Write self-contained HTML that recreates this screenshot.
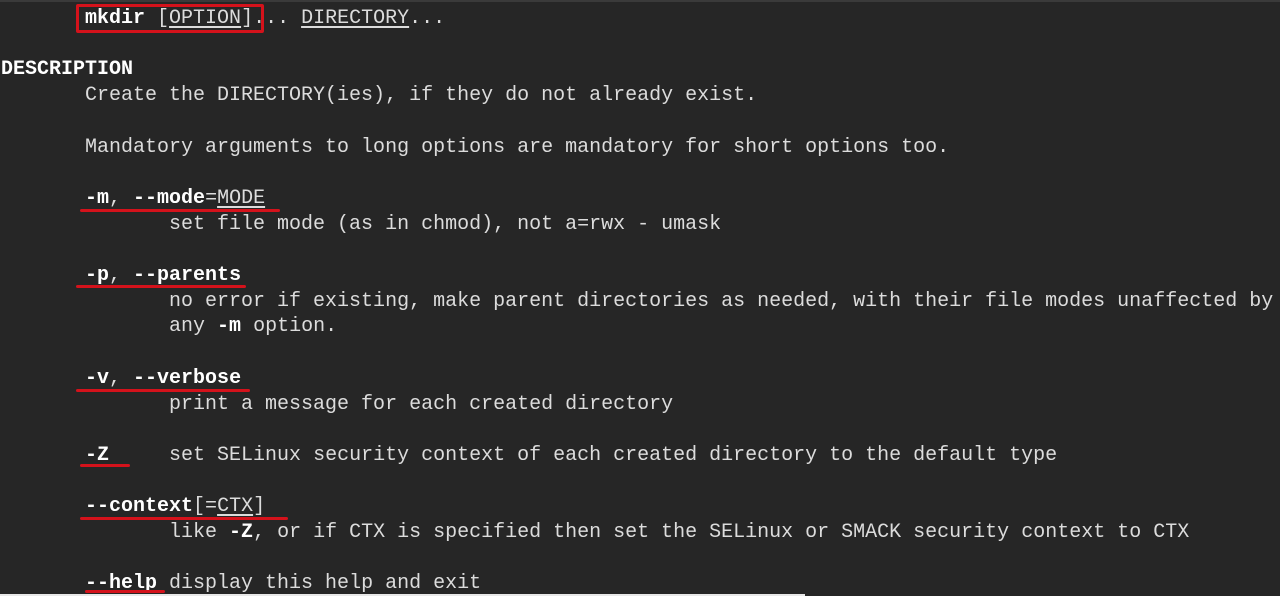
<!DOCTYPE html>
<html><head><meta charset="utf-8"><style>
html,body{margin:0;padding:0;background:#262626;width:1280px;height:596px;overflow:hidden;position:relative}
pre{position:absolute;left:1px;top:6px;margin:0;font:20px/25.7px "Liberation Mono","DejaVu Sans Mono",monospace;color:#dcdcdc;white-space:pre}
b{color:#fff}
u{text-decoration:underline;text-underline-offset:3px}
.r{position:absolute;background:#d4121b;height:3px;border-radius:2px}
</style></head><body>
<div style="position:absolute;left:0;top:0;width:1280px;height:2px;background:#3a3a3a"></div>
<pre>       <b>mkdir</b> [<u>OPTION</u>]... <u>DIRECTORY</u>...

<b>DESCRIPTION</b>
       Create the DIRECTORY(ies), if they do not already exist.

       Mandatory arguments to long options are mandatory for short options too.

       <b>-m</b>, <b>--mode</b>=<u>MODE</u>
              set file mode (as in chmod), not a=rwx - umask

       <b>-p</b>, <b>--parents</b>
              no error if existing, make parent directories as needed, with their file modes unaffected by
              any <b>-m</b> option.

       <b>-v</b>, <b>--verbose</b>
              print a message for each created directory

       <b>-Z</b>     set SELinux security context of each created directory to the default type

       <b>--context</b>[=<u>CTX</u>]
              like <b>-Z</b>, or if CTX is specified then set the SELinux or SMACK security context to CTX

       <b>--help</b> display this help and exit</pre>
<div style="position:absolute;left:76px;top:4px;width:182px;height:23px;border:3px solid #d4121b;border-radius:2px"></div>
<div class="r" style="left:80px;top:209px;width:200px"></div>
<div class="r" style="left:76px;top:285px;width:170px"></div>
<div class="r" style="left:76px;top:389px;width:174px"></div>
<div class="r" style="left:80px;top:464px;width:50px"></div>
<div class="r" style="left:80px;top:517px;width:208px"></div>
<div class="r" style="left:85px;top:590px;width:80px"></div>
<div style="position:absolute;left:0;top:594px;width:805px;height:2px;background:#e8e8e8"></div>
</body></html>
